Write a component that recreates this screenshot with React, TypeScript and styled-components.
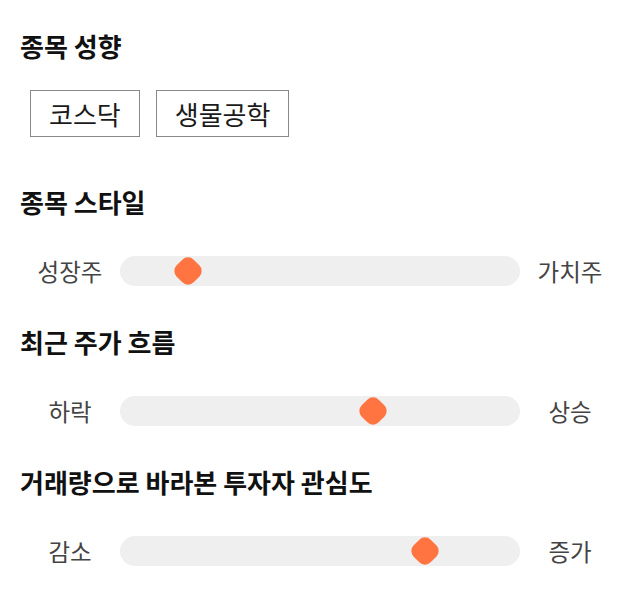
import React from 'react'
import styled, { createGlobalStyle } from 'styled-components'

const GlobalStyle = createGlobalStyle`
  body {
    margin: 0;
    background: #fff;
    font-family: "Noto Sans CJK KR", "Noto Sans", sans-serif;
  }
`

const Page = styled.div`
  width: 600px;
  padding: 31px 20px 0;
  display: flex;
  flex-direction: column;
`

const Section = styled.section<{ $gap: number; $after: number }>`
  display: flex;
  flex-direction: column;
  gap: ${(p) => p.$gap}px;
  margin-bottom: ${(p) => p.$after}px;
`

const Title = styled.h2`
  margin: 0;
  font-size: 26px;
  line-height: 30px;
  font-weight: 700;
  color: #111;
`

const ChipRow = styled.div`
  display: flex;
  gap: 16px;
  padding-left: 10px;
`

const Chip = styled.button`
  height: 47px;
  padding: 0 18px;
  border: 1px solid #888;
  background: #fff;
  font-family: inherit;
  font-size: 26px;
  color: #1a1a1a;
  line-height: 45px;
  cursor: pointer;
`

const SliderRow = styled.div`
  display: grid;
  grid-template-columns: 100px 1fr 100px;
  align-items: center;
  height: 30px;
`

const Label = styled.span`
  text-align: center;
  font-size: 23.5px;
  line-height: 30px;
  color: #444;
`

const Track = styled.div`
  position: relative;
  height: 30px;
  border-radius: 15px;
  background: #efefef;
`

const Thumb = styled.div`
  position: absolute;
  top: 50%;
  width: 24px;
  height: 24px;
  border-radius: 8px;
  background: #ff7441;
  transform: translate(-50%, -50%) rotate(45deg);
`

interface SliderProps {
  left: string
  right: string
  value: number
}

const Slider: React.FC<SliderProps> = ({ left, right, value }) => (
  <SliderRow>
    <Label>{left}</Label>
    <Track>
      <Thumb style={{ left: `${value}%` }} />
    </Track>
    <Label>{right}</Label>
  </SliderRow>
)

const sliders = [
  { title: '종목 스타일', left: '성장주', right: '가치주', value: 17 },
  { title: '최근 주가 흐름', left: '하락', right: '상승', value: 63.25 },
  { title: '거래량으로 바라본 투자자 관심도', left: '감소', right: '증가', value: 76.25 },
]

const App: React.FC = () => {
  return (
    <>
      <GlobalStyle />
      <Page>
        <Section $gap={29} $after={50}>
          <Title>종목 성향</Title>
          <ChipRow>
            <Chip>코스닥</Chip>
            <Chip>생물공학</Chip>
          </ChipRow>
        </Section>
        {sliders.map((s) => (
          <Section key={s.title} $gap={39} $after={41}>
            <Title>{s.title}</Title>
            <Slider left={s.left} right={s.right} value={s.value} />
          </Section>
        ))}
      </Page>
    </>
  )
}

export default App
